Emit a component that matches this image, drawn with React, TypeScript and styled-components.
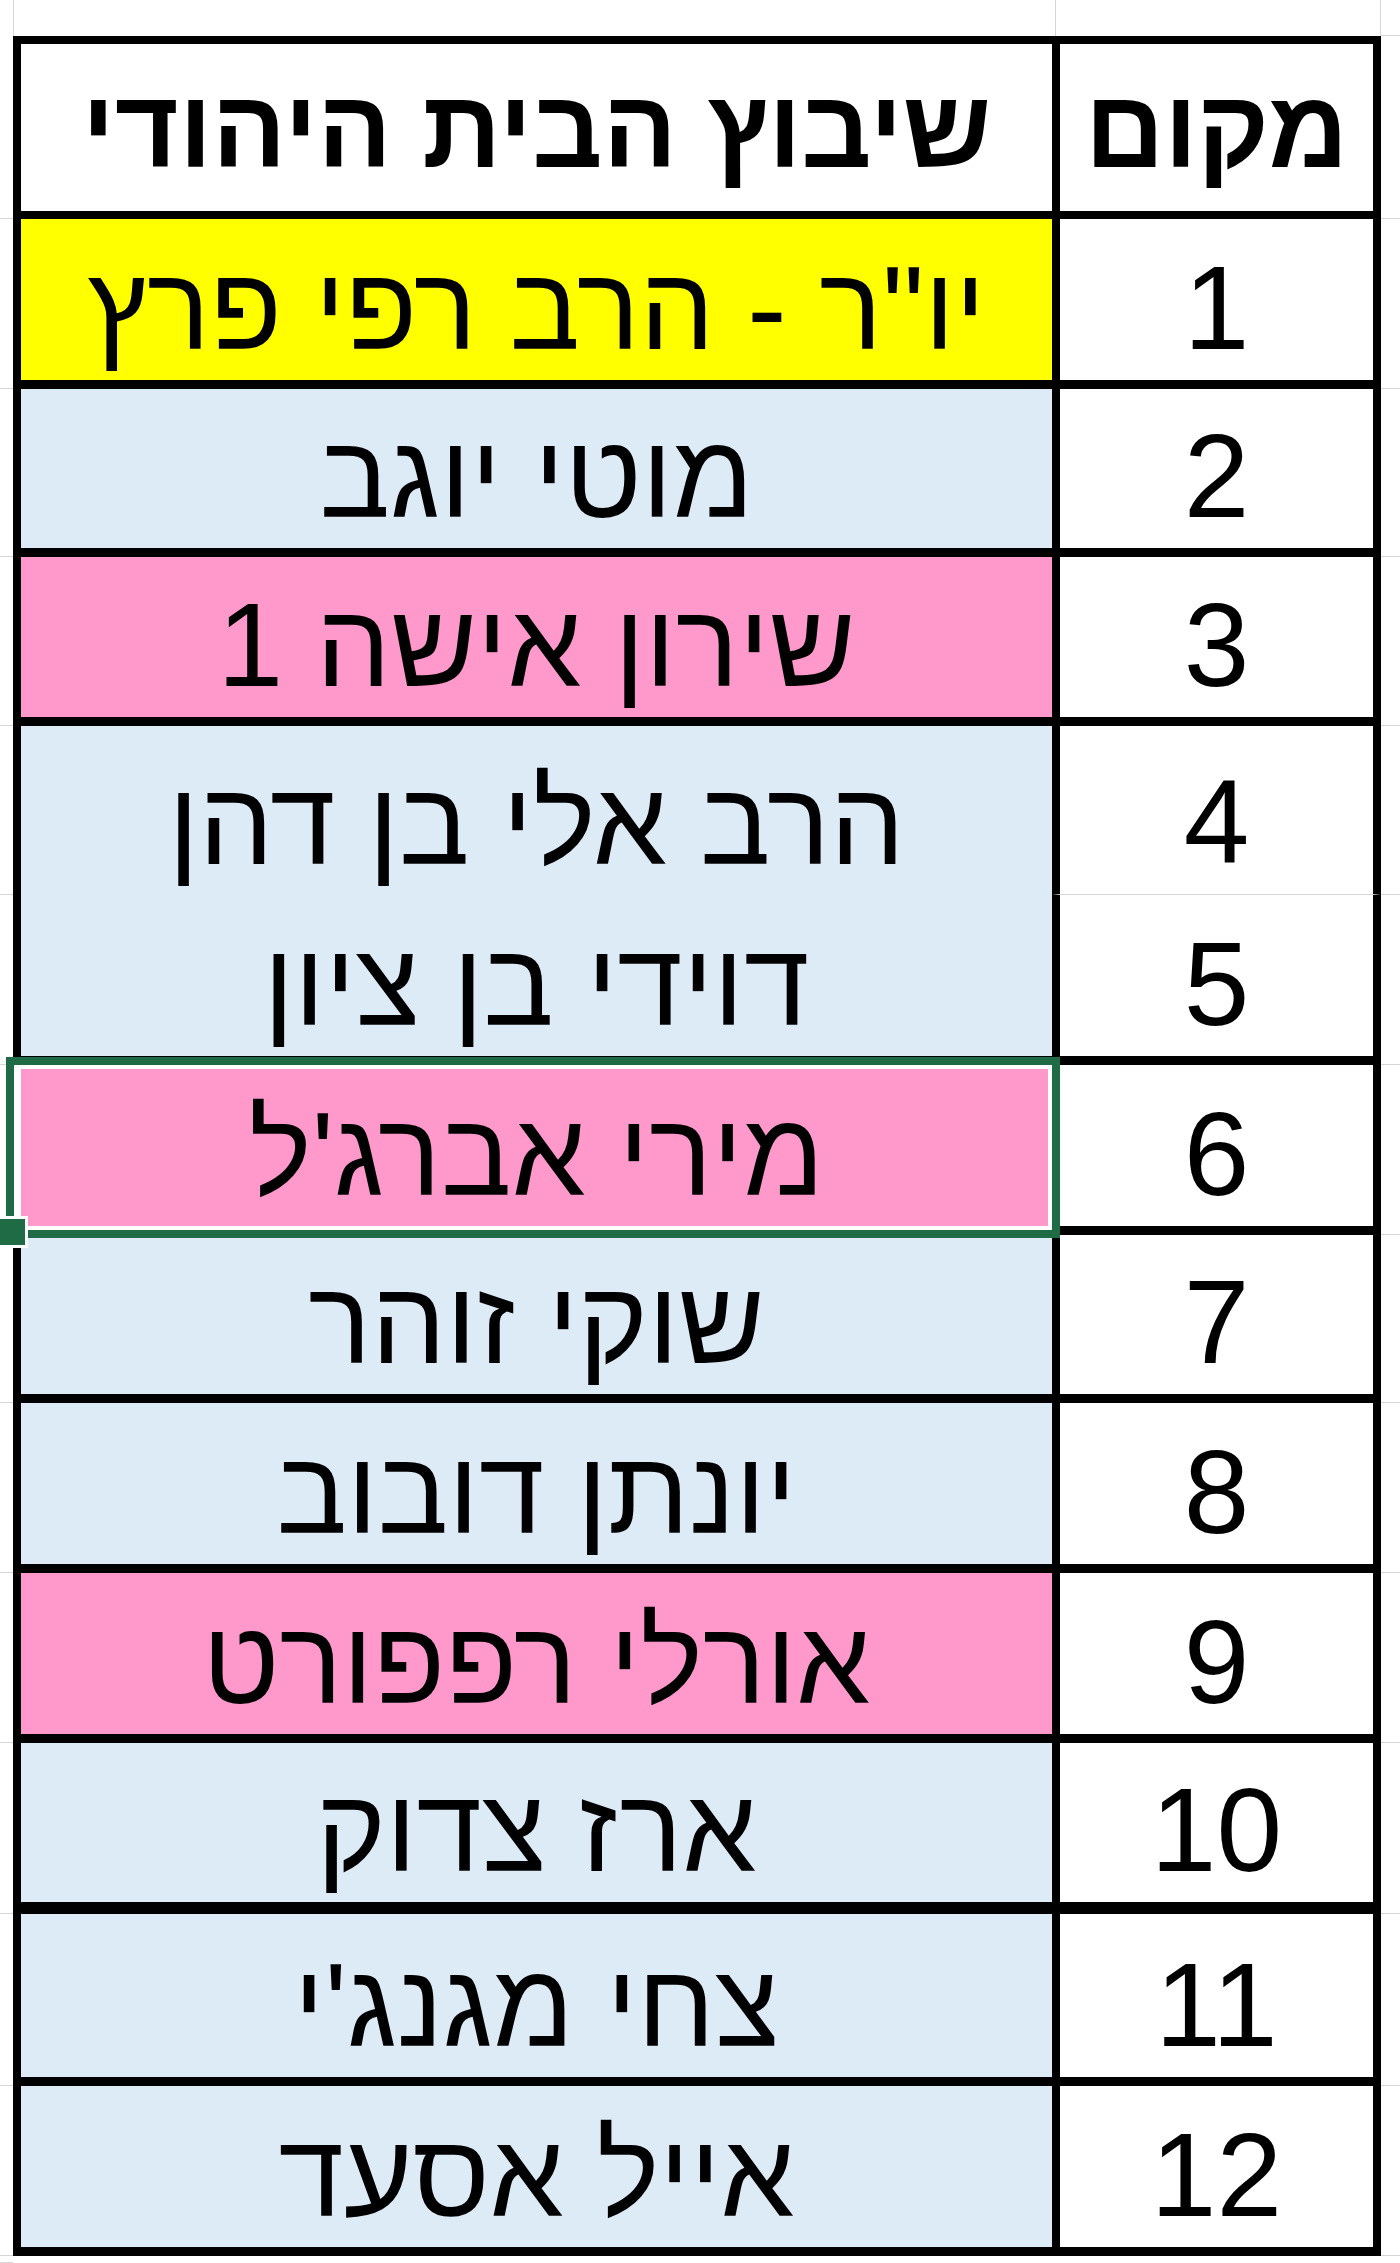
import styled, { createGlobalStyle, css } from 'styled-components'

type Fill = 'yellow' | 'blue' | 'pink'
type Rule = 'thick' | 'heavy' | 'grid'

const fills: Record<Fill, string> = {
    yellow: '#ffff00',
    blue: '#ddebf7',
    pink: '#ff99cc',
}

const gridColor = '#d6d6d6'

const rows: {
    place: number
    name: string
    fill: Fill
    height: number
    rule: Rule
    selected?: boolean
}[] = [
    { place: 1, name: 'יו"ר - הרב רפי פרץ', fill: 'yellow', height: 170, rule: 'thick' },
    { place: 2, name: 'מוטי יוגב', fill: 'blue', height: 168, rule: 'thick' },
    { place: 3, name: 'שירון אישה 1', fill: 'pink', height: 169, rule: 'thick' },
    { place: 4, name: 'הרב אלי בן דהן', fill: 'blue', height: 169, rule: 'grid' },
    { place: 5, name: 'דוידי בן ציון', fill: 'blue', height: 170, rule: 'thick' },
    { place: 6, name: "מירי אברג'ל", fill: 'pink', height: 170, rule: 'thick', selected: true },
    { place: 7, name: 'שוקי זוהר', fill: 'blue', height: 168, rule: 'thick' },
    { place: 8, name: 'יונתן דובוב', fill: 'blue', height: 170, rule: 'thick' },
    { place: 9, name: 'אורלי רפפורט', fill: 'pink', height: 170, rule: 'thick' },
    { place: 10, name: 'ארז צדוק', fill: 'blue', height: 171, rule: 'heavy' },
    { place: 11, name: "צחי מגנג'י", fill: 'blue', height: 172, rule: 'thick' },
    { place: 12, name: 'אייל אסעד', fill: 'blue', height: 170, rule: 'thick' },
]

export default function App() {
    return (
        <>
            <GlobalStyle />
            <Sheet dir="ltr">
                <SheetRow $height={36}>
                    <Spacer $width={14} />
                    <Spacer $width={1042} />
                    <Spacer $width={325} />
                    <Edge $width={19} />
                </SheetRow>
                <SheetRow $height={183}>
                    <Edge $width={13} />
                    <NameCell $fill="#ffffff" $rule="thick" $header>
                        <HeaderText dir="rtl">שיבוץ הבית היהודי</HeaderText>
                    </NameCell>
                    <PlaceCell $rule="thick" $header>
                        <HeaderText dir="rtl">מקום</HeaderText>
                    </PlaceCell>
                    <Edge $width={19} />
                </SheetRow>
                {rows.map((row) => (
                    <SheetRow key={row.place} $height={row.height}>
                        <Edge $width={13} />
                        <NameCell
                            $fill={fills[row.fill]}
                            $rule={row.rule}
                            $selected={row.selected}
                        >
                            <CellText dir="rtl">{row.name}</CellText>
                            {row.selected && (
                                <Selection>
                                    <FillHandle />
                                </Selection>
                            )}
                        </NameCell>
                        <PlaceCell $rule={row.rule}>
                            <CellText>{row.place}</CellText>
                        </PlaceCell>
                        <Edge $width={19} />
                    </SheetRow>
                ))}
                <SheetRow $height={7}>
                    <Edge $width={13} />
                </SheetRow>
            </Sheet>
        </>
    )
}

const GlobalStyle = createGlobalStyle`
    html, body {
        margin: 0;
        padding: 0;
        background: #ffffff;
    }
    body {
        font-family: "Liberation Sans", Arial, "DejaVu Sans", sans-serif;
        color: #000000;
    }
`

const Sheet = styled.div`
    width: 1400px;
    display: flex;
    flex-direction: column;
    overflow: hidden;
`

const SheetRow = styled.div<{ $height: number }>`
    display: flex;
    flex-direction: row;
    height: ${(p) => p.$height}px;
    flex-shrink: 0;
`

const Spacer = styled.div<{ $width: number }>`
    width: ${(p) => p.$width}px;
    flex-shrink: 0;
    box-sizing: border-box;
    border-right: 1px solid ${gridColor};
`

const Edge = styled.div<{ $width: number }>`
    width: ${(p) => p.$width}px;
    flex-shrink: 0;
    box-sizing: border-box;
    border-bottom: 1px solid ${gridColor};
`

const ruleWidth = (rule: Rule) => (rule === 'heavy' ? 12 : rule === 'thick' ? 9 : 0)

const cellBase = css<{ $rule: Rule; $header?: boolean }>`
    flex-shrink: 0;
    box-sizing: border-box;
    display: flex;
    align-items: flex-end;
    justify-content: center;
    border-left: 8px solid #000000;
    border-bottom: ${(p) => (p.$header ? 8 : ruleWidth(p.$rule))}px solid #000000;
    border-top: ${(p) => (p.$header ? '8px solid #000000' : '0')};
    padding-bottom: ${(p) => (p.$header ? 27 : 13)}px;
`

const NameCell = styled.div<{
    $fill: string
    $rule: Rule
    $header?: boolean
    $selected?: boolean
}>`
    ${cellBase}
    width: 1039px;
    background: ${(p) => p.$fill};
    ${(p) =>
        p.$selected &&
        css`
            position: relative;
            border-left-color: #ffffff;
            border-bottom-color: #ffffff;
        `}
`

const PlaceCell = styled.div<{ $rule: Rule; $header?: boolean }>`
    ${cellBase}
    width: 329px;
    background: #ffffff;
    border-right: 8px solid #000000;
    ${(p) =>
        p.$rule === 'grid' &&
        css`
            border-bottom: 1px solid ${gridColor};
        `}
`

const CellText = styled.span`
    font-size: 118px;
    line-height: 1;
    font-weight: 400;
    white-space: nowrap;
`

const HeaderText = styled(CellText)`
    font-size: 110px;
    font-weight: 700;
`

const Selection = styled.div`
    position: absolute;
    top: -8px;
    left: -15px;
    right: -8px;
    bottom: -12px;
    border: 8px solid #1e6b45;
    box-shadow: inset 0 0 0 4px #ffffff;
    z-index: 2;
`

const FillHandle = styled.div`
    position: absolute;
    left: -18px;
    bottom: -18px;
    width: 26px;
    height: 26px;
    background: #1e6b45;
    border: 3px solid #ffffff;
`
